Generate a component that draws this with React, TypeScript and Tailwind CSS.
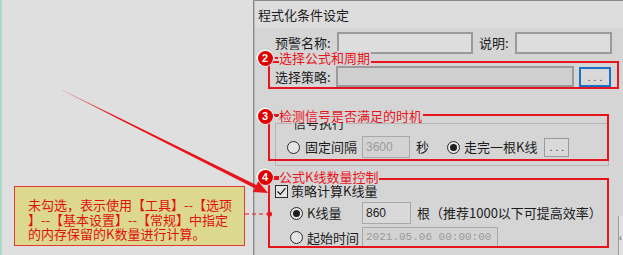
import type { ReactNode } from 'react';

const RED = '#e8141c';

function Radio({ checked }: { checked?: boolean }) {
  return (
    <span className="w-[13px] h-[13px] shrink-0 rounded-full border border-[#2a2a2a] bg-[#e4e4e4] flex items-center justify-center">
      {checked && <span className="w-[7px] h-[7px] rounded-full bg-[#1e1e1e]" />}
    </span>
  );
}

function Check() {
  return (
    <span className="w-[13px] h-[13px] shrink-0 border border-[#2a2a2a] bg-[#e4e4e4] flex items-center justify-center">
      <svg width="11" height="11" viewBox="0 0 11 11">
        <path d="M1.5 5.5 L4.3 8.3 L9.5 2.2" fill="none" stroke="#1e1e1e" strokeWidth="1.3" />
      </svg>
    </span>
  );
}

function Badge({ n, x, y, dash, children }: { n: number; x: number; y: number; dash?: boolean; children: ReactNode }) {
  return (
    <div className="absolute flex items-center" style={{ left: x - 9, top: y - 9 }}>
      <span className="w-[18px] h-[18px] rounded-full bg-[#f2f2f2] flex items-center justify-center shadow-[0_0_1px_#999]">
        <span className="w-[15px] h-[15px] rounded-full bg-[#e00000] text-white text-[11px] font-bold leading-none flex items-center justify-center font-['Liberation_Sans',sans-serif]">
          {n}
        </span>
      </span>
      <span className={dash ? 'w-[5px] h-[1.5px] bg-[#e8141c]' : 'w-[3px] h-[2px] bg-[#e8141c] ml-[1px] mr-[1px]'} />
      <span className="bg-[#d5d5d5] text-[#e8141c] text-[13px] leading-[14px] pr-[1px]">{children}</span>
    </div>
  );
}

function DotsButton({ w, h, blue }: { w: number; h: number; blue?: boolean }) {
  return (
    <div
      className={
        blue
          ? 'border-2 border-[#1a6fc6] bg-[#d9d9d9] flex items-center justify-center text-[10px] tracking-[3px] text-[#333] leading-none'
          : 'border border-[#9a9a9a] bg-[#d9d9d9] flex items-center justify-center text-[10px] tracking-[3px] text-[#333] leading-none'
      }
      style={{ width: w, height: h }}
    >
      <span className="pl-[3px]">...</span>
    </div>
  );
}

export default function App() {
  return (
    <div className="relative w-[623px] h-[255px] overflow-hidden flex text-[#1c1c1c] font-['Noto_Sans_CJK_SC',sans-serif]">
      {/* left panel */}
      <div className="w-[254px] h-full shrink-0 bg-[#dfdfdf] border-l-2 border-[#a6dcc2] border-r border-r-[#8a8a8a]" />

      {/* dialog */}
      <div className="flex-1 h-full bg-[#d5d5d5] border-l border-[#b8b8b8] border-t border-t-[#8a8a8a] flex flex-col">
        <div className="h-[27px] bg-[#dddddd] flex items-center pl-[3px] text-[13px] leading-none">程式化条件设定</div>

        <div className="pl-[20px] flex flex-col">
          <div className="mt-[4px] flex items-center h-[22px] text-[13px]">
            <span className="w-[62px]">预警名称:</span>
            <div className="w-[136px] h-[22px] bg-[#dddddd] border-2 border-[#9a9a9a]" />
            <span className="ml-[6px] w-[36px]">说明:</span>
            <div className="w-[97px] h-[22px] bg-[#dddddd] border-2 border-[#9a9a9a]" />
          </div>

          <div className="mt-[12px] flex items-center h-[21px] text-[13px]">
            <span className="w-[61px]">选择策略:</span>
            <div className="w-[238px] h-[21px] bg-[#cfcfcf] border-2 border-[#9a9a9a]" />
            <div className="ml-[5px]">
              <DotsButton w={32} h={20} blue />
            </div>
          </div>

          <fieldset className="mt-[29px] w-[334px] border border-[#b4b4b4] px-[11px] pb-[7px]">
            <legend className="ml-[5px] px-[1px] text-[13px] leading-[14px]">信号执行</legend>
            <div className="mt-[6px] flex items-center h-[22px] text-[13px]">
              <Radio />
              <span className="ml-[5px]">固定间隔</span>
              <div className="ml-[5px] w-[48px] h-[22px] border border-[#a8a8a8] bg-[#d3d3d3] flex items-center pl-[3px] text-[12px] text-[#9a9a9a] font-['Liberation_Sans',sans-serif]">
                3600
              </div>
              <span className="ml-[6px]">秒</span>
              <span className="ml-[18px]">
                <Radio checked />
              </span>
              <span className="ml-[4px]">走完一根K线</span>
              <div className="ml-[7px]">
                <DotsButton w={25} h={19} />
              </div>
            </div>
          </fieldset>

          <div className="mt-[18px] flex items-center h-[14px] text-[13px]">
            <Check />
            <span className="ml-[3px]">策略计算K线量</span>
          </div>

          <div className="mt-[4px] flex items-center h-[22px] text-[13px] pl-[15px]">
            <div className="w-[72px] flex items-center">
              <Radio checked />
              <span className="ml-[4px]">K线量</span>
            </div>
            <div className="w-[49px] h-[22px] border border-[#a8a8a8] bg-[#d9d9d9] flex items-center pl-[3px] text-[12px] text-[#222] font-['Liberation_Sans',sans-serif]">
              860
            </div>
            <span className="ml-[6px]">根（推荐1000以下可提高效率）</span>
          </div>

          <div className="mt-[3px] flex items-center h-[21px] text-[13px] pl-[15px]">
            <div className="w-[72px] flex items-center">
              <Radio />
              <span className="ml-[4px]">起始时间</span>
            </div>
            <div className="w-[136px] h-[21px] border border-[#a8a8a8] bg-[#d3d3d3] flex items-center pl-[3px] text-[11px] text-[#9a9a9a] font-['Liberation_Mono',monospace]">
              2021.05.06 00:00:00
            </div>
          </div>
        </div>
      </div>

      {/* edge of a neighbouring control */}
      <div className="absolute left-[618px] top-[216px] w-[5px] h-[39px] border-l border-[#9a9a9a] bg-[#e2e2e2] text-[10px] leading-none pt-[16px] text-[#444]">‹</div>

      {/* annotation boxes */}
      <div className="absolute left-[268px] top-[61px] w-[351px] h-[28px] border-2 border-[#e8141c]" />
      <div className="absolute left-[268px] top-[114px] w-[341px] h-[47px] border-2 border-[#e8141c]" />
      <div className="absolute left-[268px] top-[178px] w-[341px] h-[70px] border-2 border-[#e8141c]" />

      <Badge n={2} x={265} y={58}>选择公式和周期</Badge>
      <Badge n={3} x={265} y={116}>检测信号是否满足的时机</Badge>
      <Badge n={4} x={265} y={177} dash>公式K线数量控制</Badge>

      {/* callout */}
      <div className="absolute left-[14px] top-[186px] w-[231px] h-[60px] bg-[#dcd98e] border border-[#e23a3a] pl-[13px] pt-[11px] text-[13px] leading-[14.5px] text-[#e01010]">
        <div>未勾选，表示使用【工具】--【选项</div>
        <div>】--【基本设置】--【常规】中指定</div>
        <div>的内存保留的K数量进行计算。</div>
      </div>

      <svg className="absolute inset-0 pointer-events-none" width="623" height="255" viewBox="0 0 623 255">
        <defs>
          <linearGradient id="fade" x1="62" y1="90" x2="268" y2="193" gradientUnits="userSpaceOnUse">
            <stop offset="0" stopColor={RED} stopOpacity="0.2" />
            <stop offset="0.25" stopColor={RED} stopOpacity="1" />
            <stop offset="1" stopColor={RED} stopOpacity="1" />
          </linearGradient>
        </defs>
        <polygon
          points="62.1,89.7 256.3,185.1 258.2,181.3 268,193 252.8,192.1 254.7,188.3 61.9,90.3"
          fill="url(#fade)"
        />
        <line x1="245" y1="214" x2="268" y2="214" stroke={RED} strokeWidth="1.2" strokeDasharray="4 3" />
        <circle cx="269.5" cy="214" r="2.5" fill={RED} />
      </svg>
    </div>
  );
}
